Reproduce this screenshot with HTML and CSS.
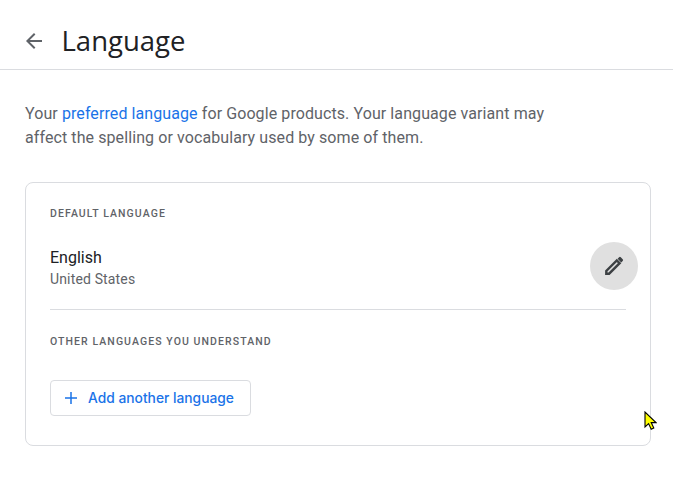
FILE: index.html
```html
<!DOCTYPE html>
<html lang="en">
<head>
<meta charset="utf-8">
<title>Language</title>
<link rel="stylesheet" href="styles.css">
</head>
<body>
<header class="topbar">
  <svg class="back" viewBox="0 0 24 24" width="24" height="24"><path d="M20 11H7.83l5.59-5.59L12 4l-8 8 8 8 1.41-1.41L7.83 13H20z"/></svg>
  <h1 class="title">Language</h1>
</header>
<main class="content">
  <p class="intro">Your <a class="link" href="#">preferred language</a> for Google products. Your language variant may affect the spelling or vocabulary used by some of them.</p>
  <section class="card">
    <h2 class="label">DEFAULT LANGUAGE</h2>
    <div class="lang-row">
      <div class="lang-text">
        <div class="lang-name">English</div>
        <div class="lang-region">United States</div>
      </div>
      <button class="edit" aria-label="Edit">
        <svg viewBox="0 0 24 24" width="24" height="24"><path class="pencil-body" d="M4.300 19.700v-2.800L14.800 6.400l2.800 2.800L7.100 19.700z"/><path class="pencil-cap" d="M15.600 4.800l1.500-1.500a1.200 1.200 0 0 1 1.700 0l1.900 1.900a1.200 1.200 0 0 1 0 1.700L19.200 8.400z"/></svg>
      </button>
    </div>
    <hr class="rule">
    <h2 class="label label-other">OTHER LANGUAGES YOU UNDERSTAND</h2>
    <button class="add">
      <svg viewBox="0 0 24 24" width="18" height="18"><path d="M20 13h-7v7h-2v-7H4v-2h7V4h2v7h7z"/></svg>
      <span>Add another language</span>
    </button>
  </section>
</main>
<svg class="cursor" viewBox="0 0 13 20" width="13" height="20"><path d="M1 1v15l3.6-3.4 2.6 5.6 2.6-1.2-2.6-5.4H12z" fill="#ffff00" stroke="#000" stroke-width="1.1"/></svg>
</body>
</html>
```
FILE: styles.css
```css
* { box-sizing: border-box; }
html, body { margin: 0; padding: 0; background: #fff; }
body { position: relative; width: 673px; height: 479px; overflow: hidden; font-family: Roboto, sans-serif; color: #5f6368; }
.topbar { display: flex; align-items: center; height: 70px; padding: 12px 0 0 22px; border-bottom: 1px solid #dadce0; }
.back { fill: #5f6368; flex: none; }
.title { margin: 0 0 0 15.5px; font-family: "Open Sans", sans-serif; font-size: 27.5px; font-weight: 400; color: #202124; line-height: 36px; }
.content { padding: 0 22px 0 25px; }
.intro { width: 530px; margin: 32px 0 0; font-size: 16px; line-height: 24px; letter-spacing: .09px; color: #5f6368; }
.link { color: #1a73e8; text-decoration: none; }
.card { margin-top: 32px; height: 264px; border: 1px solid #dadce0; border-radius: 8px; padding: 24px 24px 0; }
.label { margin: 0; font-size: 10.5px; font-weight: 500; letter-spacing: 1.08px; line-height: 14px; color: #5f6368; }
.lang-row { display: flex; align-items: center; justify-content: space-between; margin: 21px -12px 0 0; height: 48px; }
.lang-text { margin-top: 4px; }
.lang-name { font-size: 16px; line-height: 22px; color: #202124; }
.lang-region { font-size: 14px; line-height: 20px; letter-spacing: .15px; color: #5f6368; }
.edit { display: flex; align-items: center; justify-content: center; width: 48px; height: 48px; padding: 0; border: 0; border-radius: 50%; background: #e0e0e0; }
.pencil-body { fill: none; stroke: #3c4043; stroke-width: 2.4; }
.pencil-cap { fill: #3c4043; }
.rule { margin: 19px 0 0; border: 0; border-top: 1px solid #dadce0; }
.label-other { margin-top: 25px; }
.add { display: flex; align-items: center; gap: 8px; margin-top: 31px; height: 36px; width: 201px; padding: 0 11px; background: #fff; border: 1px solid #dadce0; border-radius: 4px; color: #1a73e8; font-family: Inter, sans-serif; font-size: 13.8px; font-weight: 500; }
.add svg { fill: #1a73e8; flex: none; }
.cursor { position: absolute; left: 644px; top: 411px; }
```
